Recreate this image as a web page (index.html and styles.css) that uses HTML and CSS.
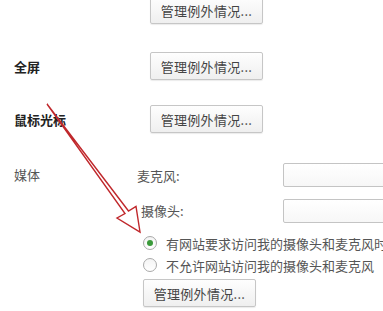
FILE: index.html
```html
<!DOCTYPE html>
<html>
<head>
<meta charset="utf-8">
<link rel="stylesheet" href="styles.css">
</head>
<body>
<div class="page">
  <div class="row first">
    <div class="label"></div>
    <button class="btn">管理例外情况...</button>
  </div>
  <div class="row">
    <div class="label bold">全屏</div>
    <button class="btn">管理例外情况...</button>
  </div>
  <div class="row">
    <div class="label bold">鼠标光标</div>
    <button class="btn">管理例外情况...</button>
  </div>
  <div class="media">
    <div class="media-label">媒体</div>
    <div class="media-body">
      <div class="field">
        <span class="field-label">麦克风:</span>
        <span class="select"></span>
      </div>
      <div class="field second">
        <span class="field-label cam">摄像头:</span>
        <span class="select"></span>
      </div>
      <div class="options">
        <label class="radio-row"><span class="radio checked"></span><span class="radio-text">有网站要求访问我的摄像头和麦克风时询问我</span></label>
        <label class="radio-row"><span class="radio"></span><span class="radio-text">不允许网站访问我的摄像头和麦克风</span></label>
        <button class="btn">管理例外情况...</button>
      </div>
    </div>
  </div>
  <svg class="arrow" width="383" height="311" viewBox="0 0 383 311">
    <path d="M47,104 L125,213.5 L117,218 L140,232 L136,206.5 L128.5,211 Z" fill="none" stroke="#c0282c" stroke-width="1.4" stroke-linejoin="miter"/>
  </svg>
</div>
</body>
</html>
```

FILE: styles.css
```css
html, body {
  margin: 0;
  padding: 0;
  background: #ffffff;
  overflow: hidden;
}

.page {
  position: relative;
  width: 383px;
  height: 311px;
  overflow: hidden;
  font-family: "Noto Sans CJK SC", "Noto Sans", sans-serif;
  font-size: 13px;
  color: #444;
  padding-left: 14px;
  box-sizing: border-box;
}

.row {
  display: flex;
  align-items: center;
  height: 28px;
  margin-bottom: 25px;
}

.row.first {
  margin-top: -4px;
  margin-bottom: 28px;
}

.label {
  width: 136px;
  flex: none;
  color: #222;
}

.bold {
  font-weight: bold;
}

.btn {
  flex: none;
  width: 113px;
  height: 28px;
  padding: 0;
  font-family: "Noto Sans CJK SC", "Noto Sans", sans-serif;
  font-size: 13px;
  color: #444;
  background: linear-gradient(#fefefe, #efefef);
  border: 1px solid #c6c6c6;
  border-radius: 2px;
  box-shadow: 0 1px 1px rgba(0, 0, 0, 0.08);
  letter-spacing: 0.3px;
}

.media {
  display: flex;
  padding-top: 5px;
}

.media-label {
  width: 123px;
  flex: none;
  height: 24px;
  line-height: 24px;
  color: #555;
}

.media-body {
  display: flex;
  flex-direction: column;
}

.field {
  display: flex;
  align-items: center;
  height: 24px;
}

.field.second {
  margin-top: 11px;
  height: 25px;
}

.field-label {
  width: 146px;
  flex: none;
  color: #555;
}

.field-label.cam {
  padding-left: 4px;
  width: 142px;
}

.select {
  width: 130px;
  height: 24px;
  box-sizing: border-box;
  border: 1px solid #c4c4c4;
  border-radius: 2px;
  background: linear-gradient(#ffffff, #f7f7f7);
  flex: none;
}

.options {
  display: flex;
  flex-direction: column;
  padding-left: 6px;
  margin-top: 9px;
}

.radio-row {
  display: flex;
  align-items: center;
  height: 22px;
  white-space: nowrap;
  color: #555;
}

.radio {
  width: 12px;
  height: 12px;
  border: 1px solid #a9a9a9;
  border-radius: 50%;
  background: linear-gradient(#f4f4f4, #ffffff);
  flex: none;
  margin-right: 9px;
  position: relative;
}

.radio.checked::after {
  content: "";
  position: absolute;
  left: 3px;
  top: 3px;
  width: 6px;
  height: 6px;
  border-radius: 50%;
  background: #3a9a3a;
}

.options .btn {
  margin-top: 3px;
}

.arrow {
  position: absolute;
  left: 0;
  top: 0;
  pointer-events: none;
}
```
